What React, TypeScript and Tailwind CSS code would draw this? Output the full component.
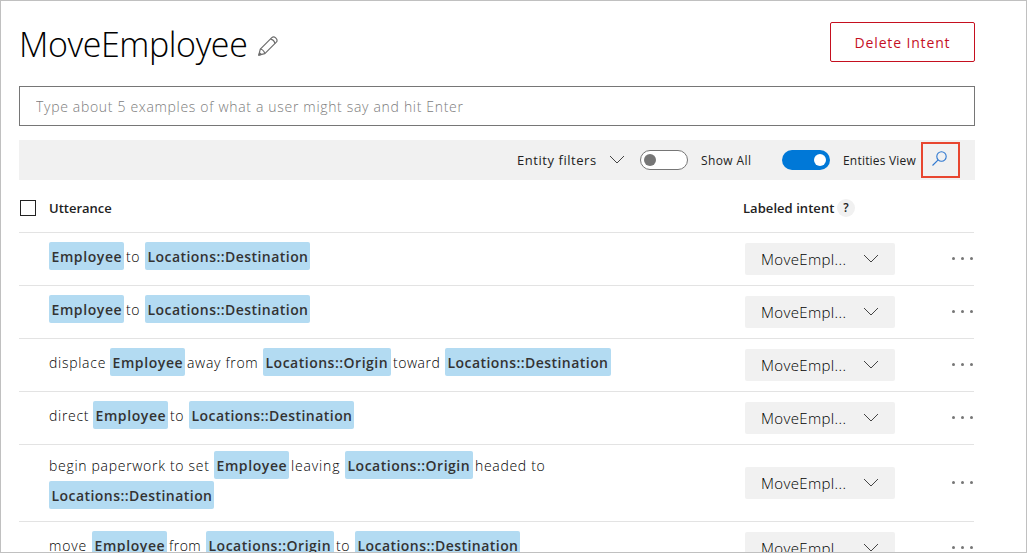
import React from "react";

type Token = { text: string; entity?: boolean; box: string };

const employee: Token = { text: "Employee", entity: true, box: "w-[75px] tracking-[0.6px]" };
const origin: Token = { text: "Locations::Origin", entity: true, box: "w-[128px] tracking-[0.5px]" };
const destination: Token = { text: "Locations::Destination", entity: true, box: "w-[165px] tracking-[0.45px]" };
const to: Token = { text: "to", box: "w-[21px] pl-[2px] tracking-[0.5px]" };

const rows: { tokens: Token[]; tall?: boolean }[] = [
  { tokens: [employee, to, destination] },
  { tokens: [employee, to, destination] },
  {
    tokens: [
      { text: "displace", box: "w-[61px] tracking-[0.72px]" },
      employee,
      { text: "away from", box: "w-[78px] pl-[2px] tracking-[0.68px]" },
      origin,
      { text: "toward", box: "w-[54px] pl-[2px] tracking-[0.5px]" },
      { ...destination, box: "w-[166px] tracking-[0.45px]" },
    ],
  },
  { tokens: [{ text: "direct", box: "w-[44px] tracking-[0.7px]" }, employee, to, destination] },
  {
    tall: true,
    tokens: [
      { text: "begin paperwork to set", box: "w-[165px] tracking-[0.7px]" },
      employee,
      { text: "leaving", box: "w-[56px] pl-[2px] tracking-[0.85px]" },
      origin,
      { text: "headed to", box: "w-[80px] pl-[2px] tracking-[0.68px]" },
      destination,
    ],
  },
  {
    tokens: [
      { text: "move", box: "w-[43px] tracking-[0.8px]" },
      employee,
      { text: "from", box: "w-[39px] pl-[2px] tracking-[0.5px]" },
      origin,
      to,
      destination,
    ],
  },
];

function Chevron() {
  return (
    <svg className="mb-[2px] h-[9px] w-4 shrink-0" viewBox="0 0 16 9" fill="none" stroke="#444" strokeWidth="1">
      <path d="M1 1l7 7 7-7" />
    </svg>
  );
}

function Utterance({ tokens }: { tokens: Token[] }) {
  return (
    <div className="flex w-[600px] flex-wrap content-start gap-y-[2px] text-[14px] leading-[28px]">
      {tokens.map((t, i) =>
        t.entity ? (
          <span
            key={i}
            className={`h-7 shrink-0 whitespace-nowrap rounded-[2px] bg-[#b3dbf2] pl-[2.5px] pt-px font-semibold text-[#333] ${t.box}`}
          >
            {t.text}
          </span>
        ) : (
          <span key={i} className={`h-7 shrink-0 whitespace-nowrap pt-px font-light text-black ${t.box}`}>
            {t.text}
          </span>
        ),
      )}
    </div>
  );
}

export default function App() {
  return (
    <div className="h-[553px] w-[1027px] overflow-hidden border border-[#c0c0c0] bg-white pl-[18px] pr-[51px] pt-[21px] font-['Open_Sans','Noto_Sans',sans-serif] text-[#222]">
      <header className="flex h-10 items-start justify-between">
        <div className="flex items-center">
          <h1 className="w-[239px] whitespace-nowrap text-[34px] font-light leading-[44px] tracking-[-0.4px] text-black">MoveEmployee</h1>
          <svg className="mt-[3px] h-5 w-5" viewBox="0 0 20 20" fill="none" stroke="#6e6e6e" strokeWidth="1.2" strokeLinejoin="round">
            <path d="M0.8 19.2l1.500-6L13.800 1.700c1-1 2.600-1 3.600 0l.9.9c1 1 1 2.600 0 3.600L6.800 17.700z" />
            <path d="M2.300 13.200c2 .2 4.100 2.300 4.500 4.500M12.400 3.100c2.300.4 4.100 2.200 4.500 4.500M0.800 19.200l2.500-.7-1.700-1.600z" />
          </svg>
        </div>
        <button className="h-10 w-[145px] rounded-[2px] border border-[#c50f1f] text-[14px] tracking-[0.85px] text-[#c50f1f]">
          Delete Intent
        </button>
      </header>

      <input
        className="mt-6 block h-10 w-[956px] border border-[#767676] px-4 text-[14px] font-light tracking-[0.68px] outline-none placeholder:text-[#7c7c7c]"
        placeholder="Type about 5 examples of what a user might say and hit Enter"
      />

      <div className="mt-[14px] flex h-10 w-[956px] items-center bg-[#f1f1f1] pl-[498px]">
        <span className="w-[92px] whitespace-nowrap pt-[2px] text-[13px] tracking-[0.55px]">Entity filters</span>
        <Chevron />
        <span className="ml-[15px] flex h-5 w-12 items-center rounded-full border border-[#767676] bg-white pl-[3px]">
          <span className="h-3 w-3 rounded-full bg-[#767676]" />
        </span>
        <span className="ml-[13px] w-[81px] whitespace-nowrap pt-[2px] text-[12px] tracking-[0.4px]">Show All</span>
        <span className="flex h-5 w-12 items-center justify-end rounded-full bg-[#0078d7] pr-1">
          <span className="h-3 w-3 rounded-full bg-white" />
        </span>
        <span className="ml-[13px] w-[78px] whitespace-nowrap pt-[2px] text-[12px] tracking-[0.2px]">Entities View</span>
        <button className="flex h-9 w-[39px] items-center justify-center border-2 border-[#e8462f]">
          <svg className="mb-[3px] mr-[2px] h-[15px] w-[15px]" viewBox="0 0 15 15" fill="none" stroke="#2f78d0" strokeWidth="1.100">
            <circle cx="9.500" cy="5.500" r="4.700" />
            <path d="M6.200 8.800L.5 14.500" />
          </svg>
        </button>
      </div>

      <div className="flex h-[53px] w-[955px] items-center border-b border-[#e3e3e3] pl-px pt-[4px] text-[13px] font-semibold">
        <span className="h-4 w-4 border border-[#222]" />
        <span className="ml-[13px] w-[694px] pt-[2px] tracking-[0px]">Utterance</span>
        <span className="w-[94px] whitespace-nowrap pt-[2px] tracking-[0.05px]">Labeled intent</span>
        <span className="flex h-[18px] w-[18px] items-center justify-center rounded-full bg-[#f1f1f1] text-[12px] font-semibold">?</span>
      </div>

      {rows.map((row, i) => (
        <div
          key={i}
          className={`flex w-[955px] shrink-0 border-b border-[#e3e3e3] pl-[30px] ${row.tall ? "h-[77px] pt-[6px]" : "h-[53px] pt-[9px]"}`}
        >
          <Utterance tokens={row.tokens} />
          <div
            className={`ml-24 flex h-8 w-[150px] shrink-0 items-center rounded-[2px] bg-[#f1f1f1] pl-4 ${row.tall ? "mt-4" : "mt-px"}`}
          >
            <span className="w-[102px] whitespace-nowrap pt-px text-[15px] font-light tracking-[0.35px] text-black">MoveEmpl...</span>
            <Chevron />
          </div>
          <div className={`ml-[56px] flex h-8 items-center gap-[6px] pb-px pl-px ${row.tall ? "mt-4" : "mt-px"}`}>
            <span className="h-[3px] w-[3px] rounded-full bg-[#767676]" />
            <span className="h-[3px] w-[3px] rounded-full bg-[#767676]" />
            <span className="h-[3px] w-[3px] rounded-full bg-[#767676]" />
          </div>
        </div>
      ))}
    </div>
  );
}
